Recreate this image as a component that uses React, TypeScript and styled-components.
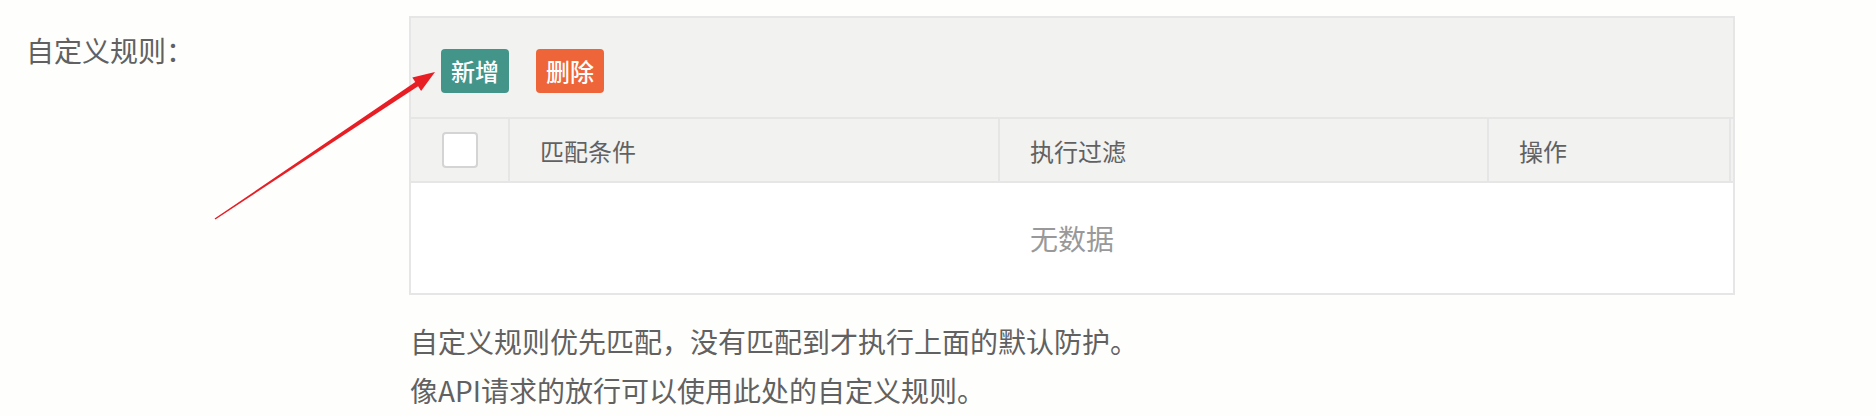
import React from "react";
import styled, { createGlobalStyle } from "styled-components";

const GlobalStyle = createGlobalStyle`
  html, body {
    margin: 0;
    padding: 0;
    background: #fefefd;
  }
  body {
    font-family: "Noto Sans CJK SC", "Noto Sans", sans-serif;
    color: #666;
  }
  * { box-sizing: border-box; }
`;

const Page = styled.div`
  position: relative;
  display: flex;
  align-items: flex-start;
  padding: 16px 0 0 26px;
  width: 1876px;
  height: 416px;
`;

const FormLabel = styled.div`
  width: 383px;
  padding-top: 10px;
  font-size: 28px;
  line-height: 48px;
  color: #616161;
  white-space: nowrap;
`;

const Content = styled.div`
  width: 1326px;
  display: flex;
  flex-direction: column;
`;

const TableBox = styled.div`
  border: 2px solid #e6e6e6;
  background: #fff;
`;

const Toolbar = styled.div`
  display: flex;
  align-items: flex-start;
  gap: 27px;
  height: 101px;
  padding: 31px 30px 0;
  background: #f2f2f1;
  border-bottom: 2px solid #e6e6e6;
`;

const ActionButton = styled.button<{ $bg: string }>`
  height: 44px;
  padding: 0 10px;
  border: none;
  border-radius: 4px;
  background: ${(p) => p.$bg};
  color: #fff;
  font-family: inherit;
  font-size: 24px;
  font-weight: 500;
  line-height: 44px;
  cursor: pointer;
`;

const HeaderRow = styled.div`
  display: grid;
  grid-template-columns: 99px 490px 489px 242px 1fr;
  height: 64px;
  background: #f2f2f1;
  border-bottom: 2px solid #e6e6e6;
`;

const HeadCell = styled.div<{ $center?: boolean; $last?: boolean }>`
  display: flex;
  align-items: center;
  justify-content: ${(p) => (p.$center ? "center" : "flex-start")};
  padding-left: ${(p) => (p.$center ? "0" : "30px")};
  border-right: ${(p) => (p.$last ? "none" : "2px solid #e6e6e6")};
  font-size: 24px;
  color: #616161;
  white-space: nowrap;
`;

const CheckBox = styled.span`
  display: block;
  width: 36px;
  height: 36px;
  margin-left: 1px;
  border: 2px solid #d4d4d4;
  border-radius: 4px;
  background: #fff;
`;

const EmptyBody = styled.div`
  height: 110px;
  display: flex;
  align-items: center;
  justify-content: center;
  font-size: 28px;
  color: #999;
  background: #fff;
`;

const Tips = styled.div`
  margin-top: 22px;
  padding-left: 1px;
  font-size: 28px;
  line-height: 49px;
  color: #616161;
`;

const ArrowSvg = styled.svg`
  position: absolute;
  left: 200px;
  top: 60px;
  width: 250px;
  height: 170px;
  pointer-events: none;
`;

export default function App() {
  return (
    <>
      <GlobalStyle />
      <Page>
        <FormLabel>自定义规则：</FormLabel>
        <Content>
          <TableBox>
            <Toolbar>
              <ActionButton $bg="#43958a">新增</ActionButton>
              <ActionButton $bg="#ee6539">删除</ActionButton>
            </Toolbar>
            <HeaderRow>
              <HeadCell $center>
                <CheckBox />
              </HeadCell>
              <HeadCell>匹配条件</HeadCell>
              <HeadCell>执行过滤</HeadCell>
              <HeadCell>操作</HeadCell>
              <HeadCell $last />
            </HeaderRow>
            <EmptyBody>无数据</EmptyBody>
          </TableBox>
          <Tips>
            自定义规则优先匹配，没有匹配到才执行上面的默认防护。
            <br />
            像API请求的放行可以使用此处的自定义规则。
          </Tips>
        </Content>
        <ArrowSvg viewBox="200 60 250 170">
          <polygon
            points="214.6,218.6 415.3,82.1 412.3,77.5 435,72 421.1,90.9 418.1,86.3 215.4,219.4"
            fill="#e81e25"
          />
        </ArrowSvg>
      </Page>
    </>
  );
}
